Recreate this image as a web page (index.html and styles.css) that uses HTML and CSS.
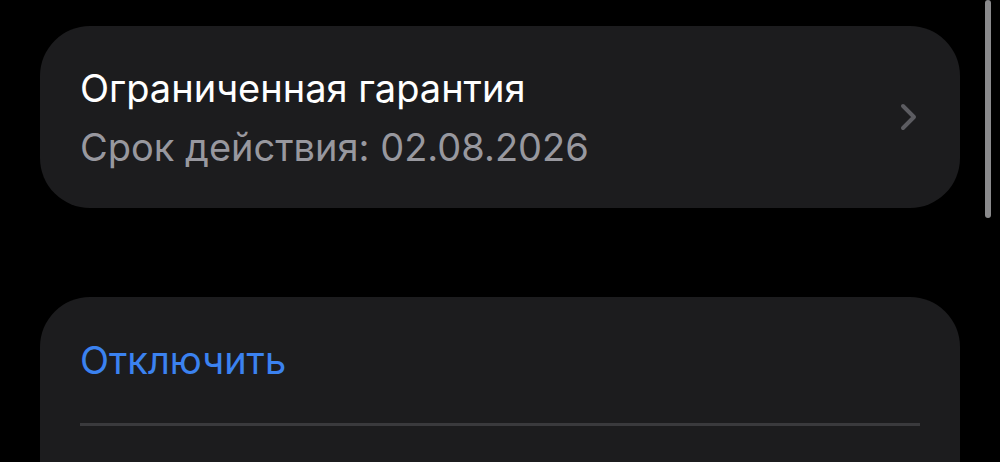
FILE: index.html
```html
<!DOCTYPE html>
<html lang="ru">
<head>
    <meta charset="UTF-8">
    <meta name="viewport" content="width=device-width, initial-scale=1.0">
    <title>Гарантия</title>
    <link rel="stylesheet" href="styles.css">
</head>
<body>
    <div class="screen">
        <div class="card">
            <div class="row row-link">
                <div class="row-text">
                    <div class="title">Ограниченная гарантия</div>
                    <div class="subtitle">Срок действия: 02.08.2026</div>
                </div>
                <svg class="chevron" width="18" height="28" viewBox="0 0 18 28">
                    <path d="M3 3 L14 14 L3 25" fill="none" stroke="#5c5c61" stroke-width="4" stroke-linecap="round" stroke-linejoin="round"/>
                </svg>
            </div>
        </div>

        <div class="card card-actions">
            <div class="row row-action">
                <span class="action">Отключить</span>
            </div>
            <div class="separator"></div>
            <div class="row row-action"></div>
        </div>
    </div>

    <div class="scrollbar"></div>
</body>
</html>
```

FILE: styles.css
```css
body {
    margin: 0;
    padding: 0;
    background: #000;
    font-family: 'Inter', 'Noto Sans', sans-serif;
    color: #fff;
    overflow: hidden;
    height: 462px;
}
.screen {
    padding: 26px 40px 0 40px;
    display: flex;
    flex-direction: column;
    gap: 89px;
}
.card {
    background: #1c1c1e;
    border-radius: 50px;
}
.row {
    display: flex;
    align-items: center;
    padding: 0 40px;
}
.row-link {
    height: 182px;
    justify-content: space-between;
}
.row-text {
    display: flex;
    flex-direction: column;
    gap: 17px;
}
.title {
    font-size: 38px;
    line-height: 42px;
}
.subtitle {
    font-size: 38px;
    line-height: 42px;
    color: #98989f;
}
.chevron {
    display: block;
    margin-right: 2px;
}
.card-actions {
    height: 300px;
}
.row-action {
    height: 126px;
}
.action {
    font-size: 38px;
    color: #3b82f0;
}
.separator {
    height: 3px;
    margin: 0 40px;
    background: #3a3a3d;
}
.scrollbar {
    position: absolute;
    top: 0;
    left: 985px;
    width: 6px;
    height: 218px;
    border-radius: 3px;
    background: #8a8a8c;
}
```
